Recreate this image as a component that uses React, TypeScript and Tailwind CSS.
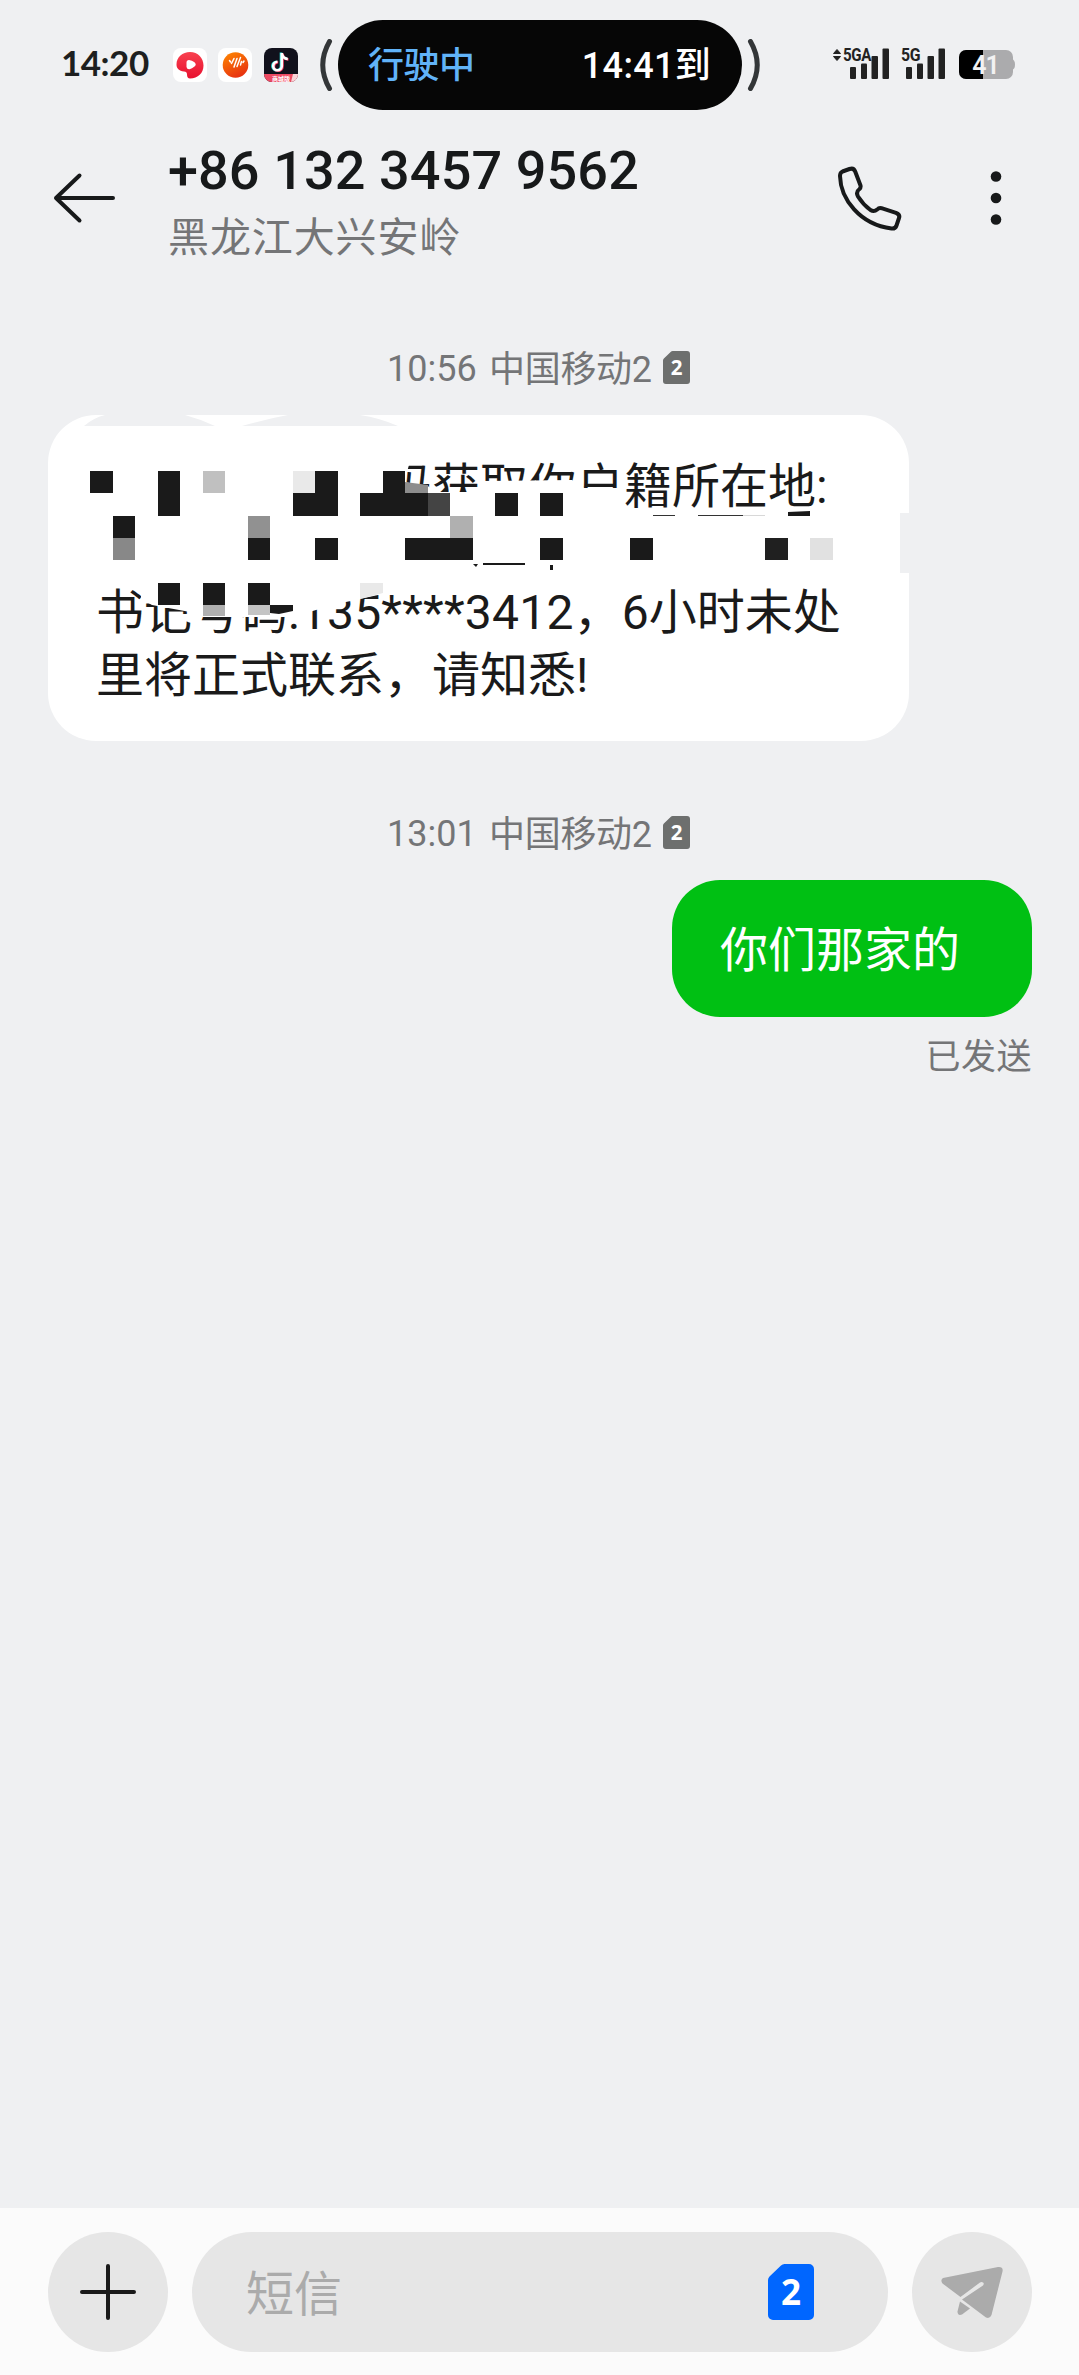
import React from 'react';

type Block = [x: number, y: number, w: number, h: number, fill: string];

const INK = '#1a1a1a';

// Mosaic cells, relative to the top left corner of the bubble
const mosaic: Block[] = [
  [42, 56, 23, 22, INK],
  [110, 56, 22, 45, INK],
  [155, 56, 22, 22, '#c0c0c0'],
  [245, 56, 22, 22, '#e9e9e9'],
  [267, 56, 23, 45, INK],
  [245, 78, 22, 23, INK],
  [335, 56, 22, 22, INK],
  [312, 78, 68, 23, INK],
  [380, 78, 22, 23, '#444444'],
  [447, 78, 23, 23, INK],
  [492, 78, 23, 23, INK],
  [65, 101, 22, 22, INK],
  [65, 123, 22, 22, '#888888'],
  [200, 101, 22, 22, '#919191'],
  [200, 123, 22, 22, INK],
  [267, 123, 23, 22, INK],
  [402, 101, 23, 22, '#b0b0b0'],
  [357, 123, 68, 22, INK],
  [492, 123, 23, 22, INK],
  [582, 123, 23, 22, INK],
  [717, 123, 23, 22, '#202020'],
  [762, 123, 23, 22, '#e1e1e1'],
  [110, 168, 22, 22, INK],
  [155, 168, 22, 22, INK],
  [200, 168, 22, 22, INK],
  [155, 190, 22, 11, '#b0b0b0'],
  [200, 190, 22, 10, '#c4c4c4'],
  // slivers of the covered second line
  [605, 100, 22, 1, '#333333'],
  [650, 100, 45, 1, '#333333'],
  [695, 100, 22, 1, '#d8d8d8'],
  [435, 148, 42, 2, INK],
  [502, 150, 3, 5, INK],
];

const SimBadge = ({ className, fill }: { className: string; fill: string }) => (
  <svg className={className} viewBox="0 0 46 56">
    <path
      d="M5 56a5 5 0 0 1-5-5V16q0-2 1.5-3.5L13 1.500Q14.500 0 16.500 0H41a5 5 0 0 1 5 5v46a5 5 0 0 1-5 5z"
      fill={fill}
    />
    <text x="23" y="41" textAnchor="middle" fontFamily="Open Sans, sans-serif" fontWeight="700" fontSize="35" fill="#fff">
      2
    </text>
  </svg>
);

const SignalBars = () => (
  <svg className="h-[31px] w-[40px]" viewBox="0 0 40 31">
    <g fill="#222">
      <rect x="0" y="19" width="6" height="12" rx="1" />
      <rect x="11" y="15.500" width="6" height="15.500" rx="1" />
      <rect x="21.500" y="8" width="6.500" height="23" rx="1" />
      <rect x="32.500" y="0.500" width="6.500" height="30.500" rx="1" />
    </g>
  </svg>
);

const StatusBar = () => (
  <div className="flex h-[130px] items-start pt-5 pl-[61px]">
    <div className="flex h-[90px] w-[112px] items-center pb-[5px] font-[Lato] text-[35px] font-bold tracking-[-0.5px] text-[#1d1f20]">
      14:20
    </div>
    <div className="flex h-[90px] items-center gap-[11px]">
      <svg className="h-[34px] w-[34px]" viewBox="0 0 34 34">
        <defs>
          <linearGradient id="red" x1="0" y1="0" x2="0" y2="1">
            <stop offset="0" stopColor="#f8414f" />
            <stop offset="1" stopColor="#e8102f" />
          </linearGradient>
        </defs>
        <rect width="34" height="34" rx="8" fill="#fff" />
        <path d="M17 4c8 0 13.500 6 13.500 13.500S25 30.500 17 30.500c-2 0-3-1.500-3-4 0-2-1-3-3-3-5-.5-7.500-3-7.500-7C3.500 9 9.500 4 17 4z" fill="url(#red)" />
        <path d="M13.500 14.500q0-2.500 2.500-2.500 3 .2 5.500 2.200 2.500 2.300 0 4.300-2.500 2.200-5 2.700-2.500.3-3-2.200z" fill="#fff" />
      </svg>
      <svg className="h-[34px] w-[34px]" viewBox="0 0 34 34">
        <defs>
          <linearGradient id="orange" x1="0" y1="0" x2=".5" y2="1">
            <stop offset="0" stopColor="#ff8a00" />
            <stop offset="1" stopColor="#e83410" />
          </linearGradient>
        </defs>
        <rect width="34" height="34" rx="8" fill="#fff" />
        <circle cx="17.500" cy="17" r="12.800" fill="url(#orange)" />
        <path d="M11.500 12.500l1 1.500M16 10.500l-2.500 5M19 10.500l-3 8.500M22.500 9.500L19 18.500M23.500 13.500l-1 3.500M26 13l-1 1.500" stroke="#fff" strokeWidth="1.500" strokeLinecap="round" />
      </svg>
      <svg className="ml-[1px] h-[34px] w-[34px]" viewBox="0 0 34 34">
        <defs>
          <clipPath id="tile">
            <rect width="34" height="34" rx="8" />
          </clipPath>
        </defs>
        <g clipPath="url(#tile)">
          <rect width="34" height="34" fill="#11111c" />
          <g fill="none" strokeWidth="2.600">
            <path d="M17 4.500v13.500a4.300 4.300 0 1 1-4.300-4.300M17 5q1 5 6 5.500" stroke="#2ee6e2" />
            <path d="M18.500 5.500v13a4.300 4.300 0 1 1-4.300-4.300M18.500 6q1 5 6 5.500" stroke="#f3385c" />
            <path d="M17.800 5V18a4.300 4.300 0 1 1-4.300-4.300M17.800 5.500q1 5 6 5.500" stroke="#fff" />
          </g>
          <path d="M0 26h34v8H0z" fill="#ee4a63" />
          <path d="M29 26h5v8h-7z" fill="#f9d4d8" />
          <text x="8" y="32.500" fontSize="6" fontWeight="700" fontFamily="Noto Sans CJK SC, sans-serif" fill="#fff">
            商城版
          </text>
        </g>
      </svg>
    </div>
    <svg className="mt-[19px] ml-[22px] h-[52px] w-[14px]" viewBox="0 0 14 52">
      <path d="M9.500 2.500Q-4 26 9.500 49.500" fill="none" stroke="#333638" strokeWidth="5" strokeLinecap="round" />
    </svg>
    <div className="ml-[4px] flex h-[90px] w-[404px] items-center justify-between rounded-full bg-[#060606] pt-[1px] pr-[31px] pl-[30px] text-[36px] font-medium">
      <span className="tracking-[-0.5px] text-[#61b3f8]">行驶中</span>
      <span className="tracking-[0.300px] text-white">14:41到</span>
    </div>
    <svg className="mt-[19px] ml-[4px] h-[52px] w-[14px]" viewBox="0 0 14 52">
      <path d="M4.500 2.500Q18 26 4.500 49.500" fill="none" stroke="#333638" strokeWidth="5" strokeLinecap="round" />
    </svg>
    <div className="relative mt-[28px] ml-[90px]">
      <svg className="absolute -left-[18px] top-0 h-[14px] w-[10px]" viewBox="0 0 10 14">
        <path d="M1.500 5.500L5 1.500l3.500 4zM1.500 8.500L5 12.500l3.500-4z" fill="#222" stroke="#222" strokeLinejoin="round" />
      </svg>
      <span className="absolute -left-[7px] -top-[1px] origin-left scale-x-[0.84] text-[18px] leading-[16px] font-bold tracking-[-0.5px] text-[#222]">5GA</span>
      <SignalBars />
    </div>
    <div className="relative mt-[28px] ml-[16px]">
      <span className="absolute -left-[5px] -top-[1px] origin-left scale-x-[0.88] text-[18px] leading-[16px] font-bold tracking-[-0.5px] text-[#222]">5G</span>
      <SignalBars />
    </div>
    <svg className="mt-[30px] ml-[13px] h-[29px] w-[57px]" viewBox="0 0 57 29">
      <defs>
        <clipPath id="cell">
          <rect width="54" height="29" rx="7" />
        </clipPath>
      </defs>
      <g clipPath="url(#cell)">
        <rect width="54" height="29" fill="#ababad" />
        <rect width="24" height="29" fill="#000" />
      </g>
      <path d="M53 9q3 1 3 5.500T53 20z" fill="#ababad" />
      <text x="26.500" y="23.500" textAnchor="middle" fontFamily="Roboto, sans-serif" fontWeight="600" fontSize="25" letterSpacing="-1" fill="#f2f2f2">
        41
      </text>
    </svg>
  </div>
);

const Header = () => (
  <header className="flex h-[136px] items-center pr-[72px] pl-[52px]">
    <svg className="h-[56px] w-[66px]" viewBox="0 0 66 56">
      <path d="M27.500 5.500L4 28l23.500 22.500M4 28h57" fill="none" stroke="#17191a" strokeWidth="4" strokeLinecap="round" strokeLinejoin="round" />
    </svg>
    <div className="ml-[50px] flex-1 pt-[12px]">
      <h1 className="text-[54px] leading-[64px] font-medium tracking-[0.100px] whitespace-nowrap text-[#17191a]">+86 132 3457 9562</h1>
      <p className="mt-[3px] text-[41px] leading-[64px] tracking-[0.9px] text-[#747577]">黑龙江大兴安岭</p>
    </div>
    <svg className="h-[66px] w-[66px]" viewBox="0 0 66 66">
      <path
        d="M6.500 6.500L13.500 4Q17.700 2.500 19.200 6.500L24.500 20.500Q25 22.500 23.500 24Q19.500 27 22 31.500Q27 39.500 34.500 45Q38 47.200 41.200 44.500Q43 42.500 45.500 43.200L60 47.800Q64.300 49.500 63 53L60.500 60.500Q59.300 64 55.500 63.500C24 59.500 4.500 34 4 11Q4 7.500 6.500 6.500Z"
        fill="none"
        stroke="#17191a"
        strokeWidth="4"
        strokeLinejoin="round"
      />
    </svg>
    <svg className="ml-[83px] h-[56px] w-[22px]" viewBox="0 0 22 56">
      <g fill="#17191a">
        <circle cx="11" cy="6.500" r="5.300" />
        <circle cx="11" cy="28" r="5.300" />
        <circle cx="11" cy="49.500" r="5.300" />
      </g>
    </svg>
  </header>
);

const Stamp = ({ time }: { time: string }) => (
  <div className="flex h-[48px] items-center pl-[387px] text-[36px] leading-[48px] text-[#747577]">
    <span className="w-[102px]">{time}</span>
    <span className="w-[174px] pt-[1px] tracking-[-0.3px]">中国移动2</span>
    <SimBadge className="-mt-[3px] h-[33px] w-[27px]" fill="#6d6f6e" />
  </div>
);

const Redaction = () => (
  <svg className="absolute top-0 left-0 h-[326px] w-[862px]" viewBox="0 0 862 326">
    <path d="M10 40H361V50L356 67L380 71L386 77H430V66L524 65L536 73H574V96H10z" fill="#fff" />
    <path d="M93 165V184L104 190L142 197L155 202H245L268 195L298 187L330 180V165z" fill="#fff" />
    <path d="M57 0Q45 3 36 11H167Q152 4 137 0zM240 0Q218 4 194 11H350Q332 3 312 0z" fill="#eff0f2" />
    <path d="M852 98h10v60h-10z" fill="#eff0f2" />
    <g shapeRendering="crispEdges">
      {mosaic.map(([x, y, w, h, fill], i) => (
        <rect key={i} x={x} y={y} width={w} height={h} fill={fill} />
      ))}
    </g>
    <path d="M357 78V67L361 56L357 67L380 70V78z" fill="#8d8d8d" />
    <path d="M222 190h23v6l-14 3-9-1z" fill={INK} />
    <path d="M312 168h23v10l-23 6z" fill="#e9e9e9" />
    <path d="M740 97l22-1v5h-22z" fill={INK} />
    <path d="M425 149h5l-2 3z" fill={INK} />
  </svg>
);

export default function App() {
  return (
    <div className="flex h-[2375px] w-[1079px] flex-col overflow-hidden bg-[#eff0f2] font-[Roboto,'Noto_Sans_CJK_SC',sans-serif]">
      <StatusBar />
      <Header />

      <main className="flex flex-1 flex-col pt-[79px]">
        <Stamp time="10:56" />
        <div className="relative mt-[22px] ml-[48px] h-[326px] w-[861px] rounded-[48px] bg-white pt-[40px] pl-[48px] text-[48px] leading-[63px] whitespace-nowrap text-[#1a1a1a]">
          <p className="pl-[288px]">码获取你户籍所在地:</p>
          <p className="mt-[63px]">
            书记号码<span className="tracking-[0.200px]">:135****3412，</span>6小时未处
          </p>
          <p>里将正式联系，请知悉!</p>
          <Redaction />
        </div>

        <div className="mt-[69px]">
          <Stamp time="13:01" />
        </div>
        <div className="mt-[22px] mr-[47px] flex flex-col items-end">
          <div className="flex h-[137px] w-[360px] items-center rounded-[48px] bg-[#00c013] pt-[5px] pl-[48px] text-[48px] text-white">
            你们那家的
          </div>
          <span className="mt-[17px] text-[35px] leading-[48px] tracking-[0.500px] text-[#747577]">已发送</span>
        </div>
      </main>

      <footer className="flex h-[167px] gap-[24px] bg-[#fbfbfb] pt-[24px] pl-[48px]">
        <button className="flex h-[120px] w-[120px] items-center justify-center rounded-full bg-[#e6e6e6]">
          <svg className="h-[56px] w-[56px]" viewBox="0 0 56 56">
            <path d="M28 2v52M2 28h52" stroke="#1a1a1a" strokeWidth="4" strokeLinecap="round" />
          </svg>
        </button>
        <div className="flex h-[120px] w-[696px] items-center justify-between rounded-full bg-[#e6e6e6] pr-[74px] pl-[54px]">
          <span className="pt-[6px] text-[48px] text-[#ababab]">短信</span>
          <SimBadge className="h-[56px] w-[46px]" fill="#0066ff" />
        </div>
        <button className="flex h-[120px] w-[120px] items-center justify-center rounded-full bg-[#e6e6e6]">
          <svg className="h-[54px] w-[64px]" viewBox="0 0 64 54">
            <g fill="#ababab">
              <path d="M3 13L58 2Q63.500 1.500 62.500 6.500L51.500 50Q50 54 46 52.500L22 34.500L43 20.500Q44.500 18.500 43 17.500Q41.500 16.500 40 17.500L20.500 32L2.500 18.500Q0 15 3 13z" />
              <path d="M20 36.500L30 43.500L22 49.500Q17.500 51 17.500 46.500z" />
            </g>
          </svg>
        </button>
      </footer>
    </div>
  );
}
